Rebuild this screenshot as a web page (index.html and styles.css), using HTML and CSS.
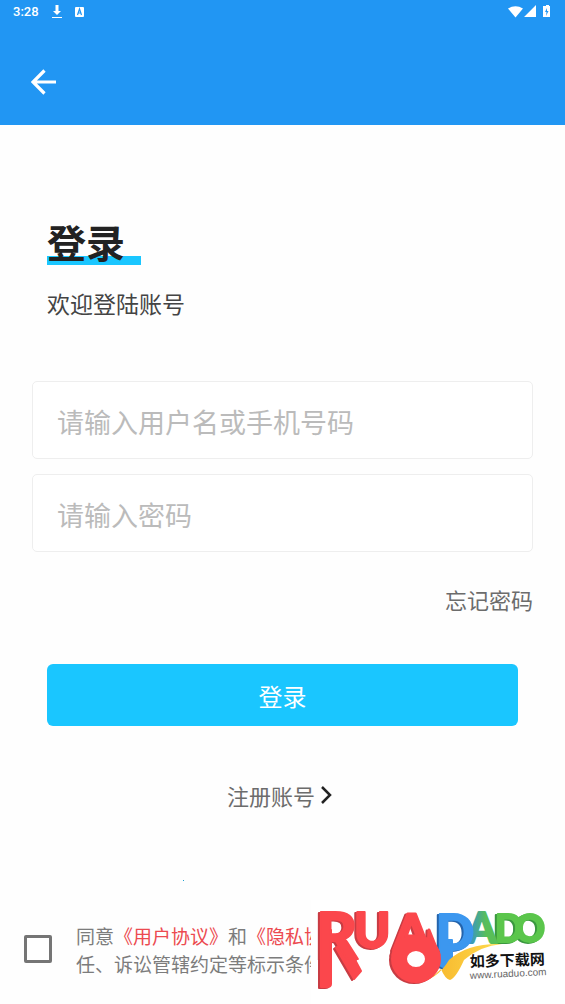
FILE: index.html
```html
<!DOCTYPE html>
<html lang="zh-CN">
<head>
<meta charset="utf-8">
<meta name="viewport" content="width=device-width, initial-scale=1">
<title>登录</title>
<link rel="stylesheet" href="styles.css">
</head>
<body>
<header class="topbar">
  <div class="status">
    <span class="clock">3:28</span>
    <svg class="status-icon" width="12" height="14" viewBox="0 0 12 14" aria-hidden="true"><path d="M4.500 0h3v6h2.500l-4 4-4-4h2.500zM1 12h10v1H1z" fill="#fff"/></svg>
    <svg class="status-icon" width="10" height="10" viewBox="0 0 10 10" aria-hidden="true"><rect width="9" height="10" rx="1" fill="#fff"/><path d="M2.500 8 4.500 2l2 6M3.500 6h2.500" fill="none" stroke="#2196f3" stroke-width="1.200"/></svg>
    <svg class="signals" width="44" height="14" viewBox="0 0 44 14" aria-hidden="true"><path d="M0 3.500Q7.500-1 15 3.500L7.500 12.500zM16 12 28 0v12zM37 1h1V0h3v1h1v11h-7V1h2z" fill="#fff"/><path d="m39 3-2 4h1.500l-.5 4 2.500-5H39z" fill="#2196f3"/></svg>
  </div>
  <button class="back" type="button" aria-label="返回">
    <svg width="26" height="26" viewBox="0 0 26 26"><path d="M13.500 1.500 2 13l11.500 11.500M2 13h23" fill="none" stroke="#fff" stroke-width="3.200"/></svg>
  </button>
</header>
<main class="page">
  <div class="intro">
    <h1 class="title">登录</h1>
    <p class="subtitle">欢迎登陆账号</p>
  </div>
  <form class="form">
    <input class="field" type="text" placeholder="请输入用户名或手机号码" aria-label="用户名或手机号码">
    <input class="field" type="password" placeholder="请输入密码" aria-label="密码">
    <a class="forgot" href="#">忘记密码</a>
    <button class="submit" type="button">登录</button>
    <a class="register" href="#">注册账号<svg width="18" height="20" viewBox="0 0 18 20" aria-hidden="true"><path d="m2 2 8 8-8 8" fill="none" stroke="#222" stroke-width="2.500"/></svg></a>
  </form>
  <span class="dot"></span>
</main>
<footer class="footer">
  <input class="agree" id="agree" type="checkbox">
  <label class="terms" for="agree">
    <span class="line">同意<a href="#">《用户协议》</a>和<a href="#">《隐私协议》</a></span>
    <span class="line">任、诉讼管辖约定等标示条件</span>
  </label>
  <svg class="logo" width="254" height="104" viewBox="311 900 254 104" role="img" aria-label="RUADADO 如多下载网">
    <defs>
      <linearGradient id="leaf"><stop offset="0" stop-color="#318be0"/><stop offset=".65" stop-color="#58bf58"/></linearGradient>
      <linearGradient id="gold" x1="0" x2="1"><stop offset="0" stop-color="#f4aa22"/><stop offset="1" stop-color="#ffdc4d"/></linearGradient>
    </defs>
    <g class="mark">
      <g class="green">
        <text x="495" y="942" font-size="37">D</text>
        <text x="515" y="942" font-size="37">O</text>
      </g>
      <text class="leaf" x="467" y="943" font-size="42">A</text>
      <g class="blue">
        <path d="M441 940h11v20l-6 8-5-2z"/>
        <text x="436" y="950" font-size="50">D</text>
      </g>
      <path d="M410 981q24 4 39-21 18-17 53-16-22 2-38 16-8 18-14 20-5-1-9-11-12 14-31 12z" fill="url(#gold)"/>
      <g class="red">
        <path d="M321 930h10v54q0 3-4 3h-6zM336 948l9-7 16 30-7 8z"/>
        <text x="316" y="959" font-size="64">R</text>
        <text x="354" y="948" font-size="49">U</text>
      </g>
      <g class="red heavy">
        <text x="394" y="950" font-size="50">A</text>
        <path d="M402 930 393 955l11-7zM429 930l10 25-11-7z"/>
        <ellipse class="ring" cx="416" cy="959" rx="17" ry="16"/>
      </g>
    </g>
    <text class="site-name" x="470" y="967" transform="rotate(-2 470 967)">如多下载网</text>
    <text class="site-url" x="470" y="979" transform="rotate(-3 470 979)">www.ruaduo.com</text>
  </svg>
</footer>
</body>
</html>
```
FILE: styles.css
```css
* { box-sizing: border-box; }
body {
  margin: 0;
  min-height: 100vh;
  display: flex;
  flex-direction: column;
  background: #fefefe;
  color: #6c6c6c;
  font-family: "Noto Sans CJK SC", sans-serif;
}
a { color: inherit; text-decoration: none; }
button { border: 0; padding: 0; cursor: pointer; }

.topbar { background: #2196f3; padding-bottom: 19px; }
.status {
  display: flex;
  align-items: center;
  gap: 12px;
  height: 24px;
  padding: 0 13px;
  color: #fff;
}
.clock { font: 500 13px/24px Roboto, sans-serif; }
.signals { margin-left: auto; }
.back {
  display: flex;
  align-items: center;
  justify-content: center;
  width: 48px;
  height: 48px;
  margin: 34px 0 0 20px;
  background: none;
}

.page { padding: 92px 32px 0; }
.intro { padding: 0 15px; }
.title {
  width: 94px;
  margin: 0;
  font-size: 39px;
  line-height: 48px;
  font-weight: 700;
  color: #222;
  background: linear-gradient(#1ac6ff, #1ac6ff) 0 100% / 100% 9px no-repeat;
}
.subtitle {
  margin: 20px 0 0;
  font-size: 23px;
  line-height: 36px;
  color: #444;
}
.form {
  display: flex;
  flex-direction: column;
  margin-top: 60px;
}
.field {
  width: 100%;
  height: 78px;
  margin-bottom: 15px;
  padding: 2px 24px 0;
  border: 1px solid #eee;
  border-radius: 5px;
  background: #fff;
  font-family: inherit;
  font-size: 27px;
  color: #333;
}
.field::placeholder { color: #bbb; opacity: 1; }
.forgot {
  align-self: flex-end;
  margin-top: 16px;
  font-size: 22px;
  line-height: 32px;
}
.submit {
  height: 62px;
  margin: 49px 15px 0;
  border-radius: 6px;
  background: #1ac6ff;
  color: #fff;
  font-family: inherit;
  font-size: 24px;
}
.register {
  align-self: center;
  display: flex;
  align-items: center;
  gap: 5px;
  margin-top: 53px;
  font-size: 22px;
  line-height: 32px;
}
.dot {
  display: block;
  width: 1px;
  height: 1px;
  margin: 69px 0 0 151px;
  background: #1a9fd0;
}

.footer {
  display: flex;
  align-items: flex-start;
  margin-top: auto;
}
.agree {
  flex: none;
  appearance: none;
  width: 28px;
  height: 28px;
  margin: 35px 24px 0 24px;
  border: 3px solid #757575;
  border-radius: 2px;
  background: #fff;
}
.agree:checked { background: #757575; }
.terms {
  flex: 1;
  min-width: 0;
  margin-top: 22px;
  overflow: hidden;
  font-size: 19px;
  line-height: 28px;
  color: #7c7c7c;
}
.terms a { color: #ec4a50; }
.line { display: block; white-space: nowrap; }

.logo { flex: none; background: #fff; }
.mark {
  font-family: Lato, sans-serif;
  font-weight: 900;
  stroke-width: 2px;
  stroke-linejoin: round;
}
.red { fill: #fb474c; stroke: #fb474c; filter: drop-shadow(-2px 1px 0 #c83c43); }
.heavy { stroke-width: 3px; }
.ring { fill: #fff; stroke-width: 16px; }
.blue { fill: #3c97ef; stroke: #3c97ef; filter: drop-shadow(-2px 1px 0 #2464ac); }
.green { fill: #5bc64c; stroke: #5bc64c; filter: drop-shadow(-2px 1px 0 #3a983f); }
.leaf { fill: url(#leaf); stroke: url(#leaf); }
.site-name { font: 700 15px "Noto Sans CJK SC", sans-serif; fill: #111; }
.site-url { font: 10px "Liberation Sans", sans-serif; fill: #666; }
```
